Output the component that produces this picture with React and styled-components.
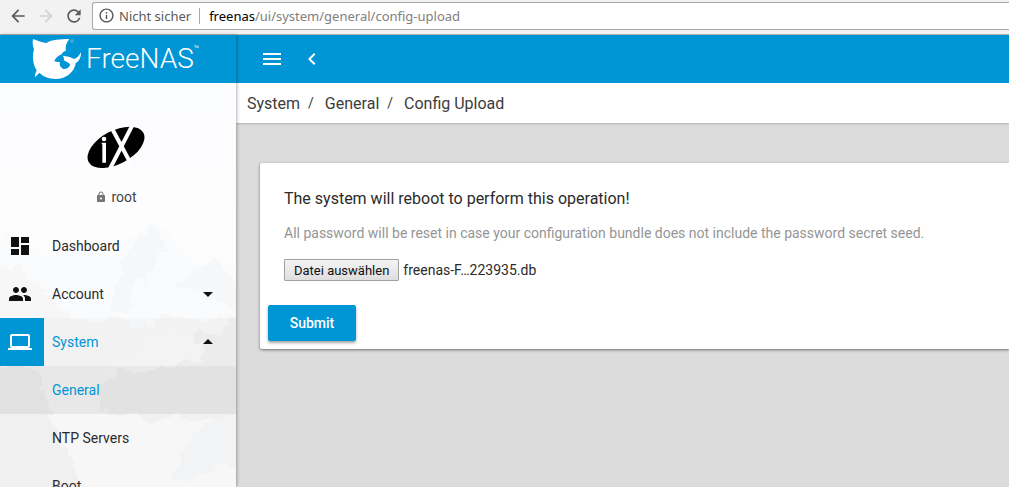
import React, { useRef } from 'react'
import styled, { createGlobalStyle } from 'styled-components'
import {
  MdArrowBack,
  MdArrowForward,
  MdRefresh,
  MdInfoOutline,
  MdMenu,
  MdChevronLeft,
  MdLock,
  MdDashboard,
  MdPeople,
  MdLaptop,
  MdArrowDropDown,
  MdArrowDropUp,
} from 'react-icons/md'

const menu = [
  { label: 'Dashboard', icon: <MdDashboard /> },
  { label: 'Account', icon: <MdPeople />, caret: 'down' },
  { label: 'System', icon: <MdLaptop />, caret: 'up', open: true },
  { label: 'General', selected: true },
  { label: 'NTP Servers' },
  { label: 'Boot' },
]

function SharkLogo() {
  return (
    <svg width="50" height="42" viewBox="96 114 150 126" aria-hidden="true">
      <path
        fill="#fff"
        d="M99 117 C112 122 128 129 139 129 C156 118 180 118 208 117 C199 128 195 140 198 152 C190 154 187 158 185 163 C176 166 168 174 163 182 C168 186 174 187 180 186 C177 194 181 203 190 207 C199 208 207 203 211 194 C207 187 199 186 191 181 C193 178 192 171 188 167 C200 168 212 171 222 177 C231 174 238 167 243 157 C244 170 238 183 227 190 C225 207 211 226 190 233 C165 241 137 237 119 219 C114 222 109 227 105 232 C104 226 107 218 110 211 C98 193 96 169 102 148 C98 138 97 127 99 117 Z"
      />
      <circle cx="216" cy="123" r="4" fill="none" stroke="#fff" strokeWidth="1.4" opacity=".7" />
    </svg>
  )
}

function IxLogo() {
  return (
    <svg width="58" height="42" viewBox="50 46 174 126" aria-hidden="true">
      <ellipse cx="137" cy="110" rx="93" ry="50" transform="rotate(-28 137 110)" />
      <path d="M120 44 L182 160 M188 40 L116 180" stroke="#fff" strokeWidth="12" />
      <circle cx="101" cy="85" r="7" fill="#fff" />
      <path d="M94 96 H107 V156 H96 V101 H94 Z" fill="#fff" />
    </svg>
  )
}

function Mountains() {
  return (
    <Backdrop viewBox="0 0 236 404" preserveAspectRatio="xMidYMin slice" aria-hidden="true">
      <filter id="rough" x="-10%" y="-10%" width="120%" height="120%">
        <feTurbulence type="fractalNoise" baseFrequency="0.07" numOctaves="4" seed="4" />
        <feDisplacementMap in="SourceGraphic" scale="22" xChannelSelector="R" yChannelSelector="G" />
      </filter>
      <g filter="url(#rough)">
        <path d="M-10 170 L10 150 L40 176 L62 166 L92 160 L120 164 L136 148 L150 138 L168 150 L184 170 L205 180 L250 210 V420 H-10 Z" fill="#fafbfc" />
        <path d="M110 230 L122 176 L150 140 L160 156 L170 164 L158 170 L152 190 L138 200 L128 230 Z" fill="#f6f7f9" />
        <path d="M176 206 L196 186 L214 180 L240 196 V232 L220 216 L200 212 Z" fill="#f6f7f9" />
        <path d="M-10 180 L14 184 L34 200 L60 226 L82 238 L112 236 L140 244 L170 234 L250 236 V420 H-10 Z" fill="#f7f7f8" />
        <path d="M-10 284 L20 278 L40 294 L48 320 L54 350 L66 370 L78 392 L84 420 H-10 Z" fill="#f0f0f0" />
        <path d="M100 330 L104 296 L130 284 L162 272 L190 260 L212 246 L250 236 V340 L206 336 L174 334 L140 336 Z" fill="#f1f1f1" />
        <path d="M106 290 L128 272 L150 252 L176 246 L200 262 L204 276 L176 282 L144 288 Z" fill="#f8f8f8" />
        <path d="M176 400 L184 366 L210 338 L250 334 V376 L214 386 Z" fill="#f2f3f5" />
      </g>
    </Backdrop>
  )
}

export default function App() {
  const fileInput = useRef(null)

  return (
    <Page>
      <GlobalStyle />
      <BrowserBar>
        <BrowserButton aria-label="Zurück"><MdArrowBack /></BrowserButton>
        <BrowserButton aria-label="Vorwärts" disabled><MdArrowForward /></BrowserButton>
        <BrowserButton aria-label="Neu laden"><MdRefresh /></BrowserButton>
        <AddressBar>
          <MdInfoOutline />
          <Security>Nicht sicher</Security>
          <Url><b>freenas</b>/ui/system/general/config-upload</Url>
        </AddressBar>
      </BrowserBar>
      <Shell>
        <Sidebar>
          <Brand href="#">
            <SharkLogo />
            <BrandName>FreeNAS<sup>™</sup></BrandName>
          </Brand>
          <SidebarBody>
            <Mountains />
            <Profile>
              <IxLogo />
              <User><MdLock />root</User>
            </Profile>
            <Menu>
              {menu.map((item) => (
                <li key={item.label}>
                  <MenuLink href="#" $open={item.open} $selected={item.selected}>
                    <MenuIcon $open={item.open}>{item.icon}</MenuIcon>
                    <MenuLabel>{item.label}</MenuLabel>
                    {item.caret === 'down' && <MdArrowDropDown />}
                    {item.caret === 'up' && <MdArrowDropUp />}
                  </MenuLink>
                </li>
              ))}
            </Menu>
          </SidebarBody>
        </Sidebar>
        <Main>
          <TopBar>
            <IconButton aria-label="Menu"><MdMenu /></IconButton>
            <IconButton aria-label="Collapse"><MdChevronLeft stroke="currentColor" /></IconButton>
          </TopBar>
          <Breadcrumb>
            <a href="#">System</a>
            <span>/</span>
            <a href="#">General</a>
            <span>/</span>
            <a href="#">Config Upload</a>
          </Breadcrumb>
          <Content>
            <Card>
              <CardText>
                <h1>The system will reboot to perform this operation!</h1>
                <p>All password will be reset in case your configuration bundle does not include the password secret seed.</p>
                <FileRow>
                  <FileButton type="button" onClick={() => fileInput.current.click()}>Datei auswählen</FileButton>
                  <label htmlFor="config">freenas-F…223935.db</label>
                  <HiddenFile id="config" type="file" ref={fileInput} tabIndex={-1} />
                </FileRow>
              </CardText>
              <Submit type="submit">Submit</Submit>
            </Card>
          </Content>
        </Main>
      </Shell>
    </Page>
  )
}

const GlobalStyle = createGlobalStyle`
  * {
    box-sizing: border-box;
  }
  body {
    margin: 0;
    font-family: Roboto, sans-serif;
    font-size: 14px;
    color: #2b2b2b;
  }
  a {
    color: inherit;
    text-decoration: none;
  }
  button {
    font-family: inherit;
    cursor: pointer;
  }
`
const Page = styled.div`
  display: flex;
  flex-direction: column;
  height: 100vh;
  overflow: hidden;
`
const BrowserBar = styled.div`
  display: flex;
  flex: none;
  align-items: center;
  height: 35px;
  padding: 0 0 3px 4px;
  background: #f2f2f2;
  border-bottom: 1px solid #b0b0b0;
`
const BrowserButton = styled.button`
  display: flex;
  justify-content: center;
  width: 28px;
  padding: 0;
  border: none;
  background: none;
  font-size: 20px;
  color: ${({ disabled }) => (disabled ? '#d2d2d2' : '#5a5a5a')};
`
const AddressBar = styled.div`
  display: flex;
  flex: 1;
  align-items: center;
  height: 28px;
  margin-left: 4px;
  padding-left: 5px;
  border: 1px solid #a9a9a9;
  border-right: none;
  border-radius: 3px 0 0 3px;
  background: #fff;
  font-family: "Noto Sans", sans-serif;
  font-size: 13px;
  svg {
    width: 17px;
    height: 17px;
    color: #555;
  }
`
const Security = styled.span`
  margin-left: 4px;
  padding-right: 8px;
  border-right: 1px solid #a9a9a9;
  line-height: 16px;
  color: #5a5a5a;
`
const Url = styled.span`
  margin-left: 9px;
  color: #808080;
  b {
    font-weight: 400;
    color: #000;
  }
`
const Shell = styled.div`
  display: flex;
  flex: 1;
  min-height: 0;
`
const Sidebar = styled.aside`
  display: flex;
  flex: none;
  flex-direction: column;
  width: 236px;
  box-shadow: 1px 0 3px rgba(0, 0, 0, 0.3);
  z-index: 1;
`
const Brand = styled.a`
  display: flex;
  flex: none;
  align-items: center;
  height: 48px;
  padding-left: 32px;
  background: #0095d5;
  color: #fff;
`
const BrandName = styled.span`
  display: flex;
  margin-left: 4px;
  font-size: 28px;
  font-weight: 300;
  line-height: 32px;
  sup {
    font-size: 9px;
    line-height: 12px;
  }
`
const SidebarBody = styled.div`
  position: relative;
  flex: 1;
  min-height: 0;
  overflow: hidden;
  background: linear-gradient(#fbfcff, #fdfdfd 40%, #f6f6f6 80%);
`
const Backdrop = styled.svg`
  position: absolute;
  inset: 0;
  width: 100%;
  height: 100%;
`
const Profile = styled.div`
  position: relative;
  display: flex;
  flex-direction: column;
  align-items: center;
  height: 139px;
  padding: 43px 4px 0 0;
`
const User = styled.div`
  display: flex;
  align-items: center;
  gap: 4px;
  margin-top: 20px;
  line-height: 18px;
  color: #444;
  svg {
    width: 12px;
    height: 12px;
    color: #757575;
  }
`
const Menu = styled.ul`
  position: relative;
  margin: 0;
  padding: 0;
  list-style: none;
`
const MenuLink = styled.a`
  display: flex;
  align-items: center;
  height: 48px;
  padding-right: 16px;
  color: ${({ $open, $selected }) => ($open || $selected ? '#0095d5' : '#2b2b2b')};
  background: ${({ $open, $selected }) =>
    $selected ? 'rgba(0, 0, 0, 0.06)' : $open ? 'rgba(0, 0, 0, 0.02)' : 'none'};
  > svg {
    width: 24px;
    height: 24px;
    color: #111;
  }
`
const MenuIcon = styled.span`
  display: flex;
  align-items: center;
  width: 44px;
  height: 48px;
  padding-left: 8px;
  font-size: 24px;
  color: ${({ $open }) => ($open ? '#fff' : '#111')};
  background: ${({ $open }) => ($open ? '#0095d5' : 'none')};
`
const MenuLabel = styled.span`
  flex: 1;
  padding-left: 8px;
`
const Main = styled.main`
  display: flex;
  flex: 1;
  flex-direction: column;
  min-width: 0;
  background: #dcdcdc;
`
const TopBar = styled.header`
  display: flex;
  flex: none;
  align-items: center;
  gap: 16px;
  height: 48px;
  padding-left: 24px;
  background: #0095d5;
`
const IconButton = styled.button`
  padding: 0;
  border: none;
  background: none;
  font-size: 24px;
  line-height: 0;
  color: #fff;
`
const Breadcrumb = styled.nav`
  display: flex;
  flex: none;
  align-items: center;
  height: 40px;
  padding-left: 11px;
  background: #fff;
  box-shadow: 0 1px 2px rgba(0, 0, 0, 0.2);
  font-size: 16px;
  color: #3c3c3c;
  span {
    margin: 0 11px 0 8px;
    font-size: 14px;
  }
`
const Content = styled.div`
  flex: 1;
  padding: 40px 0 0 24px;
`
const Card = styled.form`
  padding: 24px 8px 8px;
  border-radius: 2px 0 0 2px;
  background: #fff;
  box-shadow: 0 1px 3px rgba(0, 0, 0, 0.5);
`
const CardText = styled.div`
  padding: 0 16px;
  h1 {
    margin: 0;
    font-size: 16px;
    font-weight: 400;
    line-height: 24px;
  }
  p {
    margin: 12px 0 16px;
    line-height: 20px;
    color: #959595;
  }
`
const FileRow = styled.div`
  display: flex;
  align-items: center;
  gap: 4px;
`
const FileButton = styled.button`
  height: 22px;
  padding: 0 9px;
  border: 1px solid #a0a0a0;
  border-radius: 1px;
  background: linear-gradient(#f4f4f4, #dedede);
  font-size: 13px;
  color: #111;
`
const HiddenFile = styled.input`
  width: 1px;
  height: 1px;
  opacity: 0;
`
const Submit = styled.button`
  height: 36px;
  min-width: 88px;
  margin-top: 24px;
  padding: 0 16px;
  border: none;
  border-radius: 2px;
  background: #0095d5;
  box-shadow: 0 2px 3px rgba(0, 0, 0, 0.35);
  font-size: 14px;
  font-weight: 500;
  color: #fff;
`
